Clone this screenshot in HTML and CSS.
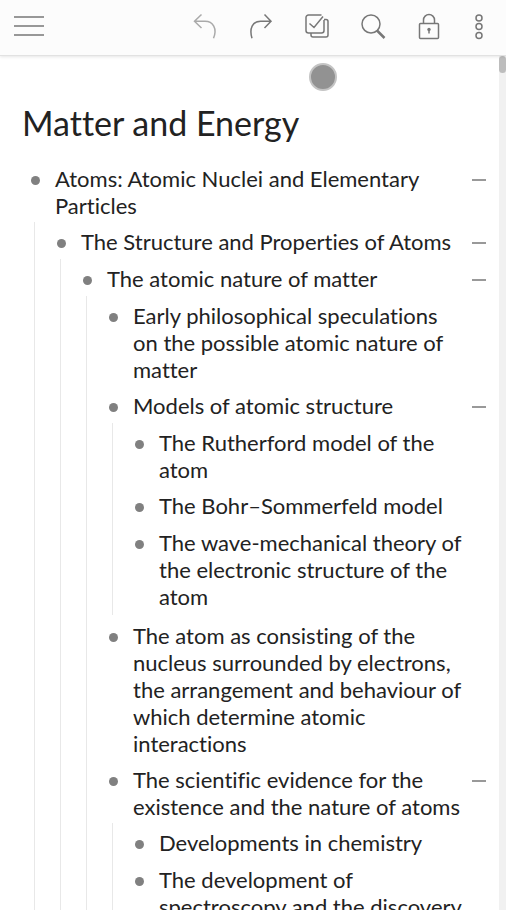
FILE: index.html
```html
<!DOCTYPE html>
<html lang="en">
<head>
<meta charset="utf-8">
<meta name="viewport" content="width=device-width, initial-scale=1">
<title>Matter and Energy</title>
<link rel="stylesheet" href="styles.css">
</head>
<body>
<header class="toolbar">
  <button class="tool" aria-label="Menu"><svg width="32" height="32" viewBox="0 0 32 32"><path d="M1 7h30M1 16h30M1 25h30"/></svg></button>
  <div class="tools">
    <button class="tool tool-muted" aria-label="Undo"><svg width="32" height="32" viewBox="0 0 32 32"><path d="M12.500 4.500L5.500 11.300l7 6.700M5.500 11.300h10.500c8 0 12.500 7 8.500 17"/></svg></button>
    <button class="tool" aria-label="Redo"><svg width="32" height="32" viewBox="0 0 32 32"><path d="M19.500 4.500l6.500 6.800-6.500 6.700M26 11.300h-10.500c-8 0-11.500 7-8.500 17"/></svg></button>
    <button class="tool" aria-label="Select"><svg width="32" height="32" viewBox="0 0 32 32"><path d="M20.500 5H7.500a2.500 2.500 0 0 0-2.500 2.500v13a2.500 2.500 0 0 0 2.500 2.500h13a2.500 2.500 0 0 0 2.500-2.500V10M8.500 13.500l4.500 4L22 6.500M23 9.500h2a2 2 0 0 1 2 2v13.500a2 2 0 0 1-2 2H12a2 2 0 0 1-2-2v-2"/></svg></button>
    <button class="tool" aria-label="Search"><svg width="32" height="32" viewBox="0 0 32 32"><circle cx="14" cy="14" r="9"/><path class="handle" d="M20 20.500l7.500 7.500"/></svg></button>
    <button class="tool" aria-label="Lock"><svg width="32" height="32" viewBox="0 0 32 32"><rect x="6.500" y="13.500" width="19" height="15" rx="1"/><path d="M10.500 13.500V10a5.500 5.500 0 0 1 11 0v3.500"/><circle class="solid" cx="16" cy="19.500" r="1.700"/><path d="M16 20v3.500"/></svg></button>
    <button class="tool tool-narrow" aria-label="More"><svg width="20" height="32" viewBox="0 0 20 32"><circle cx="10" cy="8" r="3"/><circle cx="10" cy="16.500" r="3"/><circle cx="10" cy="25.500" r="3"/></svg></button>
  </div>
</header>
<div class="view">
  <main class="page">
    <h1>Matter and Energy</h1>
    <ul class="outline">
      <li><div class="row"><span class="dot"></span><p>Atoms: Atomic Nuclei and Elementary Particles</p><button class="fold" aria-label="Collapse"></button></div>
        <ul>
          <li><div class="row"><span class="dot"></span><p>The Structure and Properties of Atoms</p><button class="fold" aria-label="Collapse"></button></div>
            <ul>
              <li><div class="row"><span class="dot"></span><p>The atomic nature of matter</p><button class="fold" aria-label="Collapse"></button></div>
                <ul>
                  <li><div class="row"><span class="dot"></span><p>Early philosophical speculations on the possible atomic nature of matter</p></div></li>
                  <li><div class="row"><span class="dot"></span><p>Models of atomic structure</p><button class="fold" aria-label="Collapse"></button></div>
                    <ul>
                      <li><div class="row"><span class="dot"></span><p>The Rutherford model of the atom</p></div></li>
                      <li><div class="row"><span class="dot"></span><p>The Bohr–Sommerfeld model</p></div></li>
                      <li><div class="row"><span class="dot"></span><p>The wave-mechanical theory of the electronic structure of the atom</p></div></li>
                    </ul>
                  </li>
                  <li><div class="row"><span class="dot"></span><p>The atom as consisting of the nucleus surrounded by electrons, the arrangement and behaviour of which determine atomic interactions</p></div></li>
                  <li><div class="row"><span class="dot"></span><p>The scientific evidence for the existence and the nature of atoms</p><button class="fold" aria-label="Collapse"></button></div>
                    <ul>
                      <li><div class="row"><span class="dot"></span><p>Developments in chemistry</p></div></li>
                      <li><div class="row"><span class="dot"></span><p>The development of spectroscopy and the discovery</p></div></li>
                    </ul>
                  </li>
                </ul>
              </li>
            </ul>
          </li>
        </ul>
      </li>
    </ul>
  </main>
  <div class="track"><div class="thumb"></div></div>
  <div class="touch"></div>
</div>
</body>
</html>
```
FILE: styles.css
```css
* { box-sizing: border-box; }
body {
  margin: 0;
  height: 100vh;
  display: flex;
  flex-direction: column;
  overflow: hidden;
  background: #fff;
  color: #222;
  font: 22px/27px Lato, "Open Sans", sans-serif;
  font-variant-ligatures: none;
}
button {
  padding: 0;
  border: 0;
  background: none;
}
ul {
  margin: 0;
  padding: 0;
  list-style: none;
}
.toolbar {
  flex: none;
  display: flex;
  align-items: center;
  justify-content: space-between;
  height: 56px;
  padding: 0 17px 3px 13px;
  background: #fcfcfc;
  border-bottom: 1px solid #e2e2e2;
  box-shadow: 0 1px 3px #0000001a;
  z-index: 1;
}
.tools {
  display: flex;
  gap: 24px;
}
.tool {
  display: block;
  width: 32px;
  height: 32px;
}
.tool-narrow { width: 20px; }
.tool svg {
  display: block;
  fill: none;
  stroke: #777;
  stroke-width: 1.5;
}
.tool-muted svg { stroke: #aaa; }
.tool .handle { stroke-width: 2.5; }
.tool .solid { fill: #777; stroke: none; }
.view {
  position: relative;
  flex: 1;
  min-height: 0;
  display: flex;
}
.page {
  flex: 1;
  min-width: 0;
  padding: 46px 13px 0 22px;
}
h1 {
  margin: 0 0 21px;
  font-size: 34px;
  line-height: 42px;
  font-weight: 400;
}
.outline { padding-left: 9px; }
.row {
  display: flex;
  min-height: 28px;
  margin-bottom: 9px;
}
.row p {
  flex: 1;
  margin: 0 7px 0 0;
}
.row p:last-child { margin-right: 21px; }
.dot {
  flex: none;
  width: 9px;
  height: 9px;
  margin: 11px 15px 0 0;
  border-radius: 50%;
  background: #808080;
}
.fold {
  flex: none;
  width: 14px;
  height: 2px;
  margin: 14px 0 0;
  background: #999;
}
li ul {
  display: flow-root;
  margin: -6px 0 7px 3px;
  padding: 6px 0 0 22px;
  border-left: 1px solid #e8e8e8;
}
li:last-child > .row:last-child { margin-bottom: 5px; }
.track {
  flex: none;
  width: 7px;
  background: #f1f1f1;
}
.thumb {
  height: 17px;
  border-radius: 4px;
  background: #bdbdbd;
}
.touch {
  position: absolute;
  left: 309px;
  top: 7px;
  width: 28px;
  height: 28px;
  border: 2px solid #c4c4c4;
  border-radius: 50%;
  background: #929292;
}
```
